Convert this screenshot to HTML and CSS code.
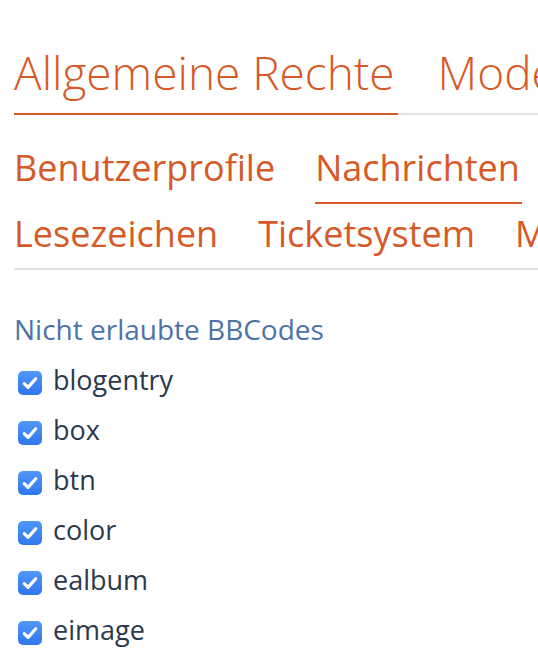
FILE: index.html
```html
<!DOCTYPE html>
<html lang="de">
<head>
<meta charset="utf-8">
<title>Benutzergruppenrechte</title>
<link rel="stylesheet" href="styles.css">
</head>
<body>
<div class="page">
  <nav class="main-tabs">
    <a class="main-tab active">Allgemeine Rechte</a>
    <a class="main-tab">Moderationsrechte</a>
  </nav>
  <nav class="sub-tabs">
    <a class="sub-tab">Benutzerprofile</a>
    <a class="sub-tab active">Nachrichten</a>
    <a class="sub-tab">Lesezeichen</a>
    <a class="sub-tab">Ticketsystem</a>
    <a class="sub-tab">Mitglieder</a>
  </nav>
  <section class="option">
    <div class="option-label">Nicht erlaubte BBCodes</div>
    <ul class="check-list">
      <li class="check-item"><span class="box"><svg viewBox="0 0 24 24" width="24" height="24"><path d="M6.3 12.6 L10.1 16.4 L17.7 7.8" fill="none" stroke="#fff" stroke-width="3.2" stroke-linecap="round" stroke-linejoin="round"/></svg></span><span class="check-text">blogentry</span></li>
      <li class="check-item"><span class="box"><svg viewBox="0 0 24 24" width="24" height="24"><path d="M6.3 12.6 L10.1 16.4 L17.7 7.8" fill="none" stroke="#fff" stroke-width="3.2" stroke-linecap="round" stroke-linejoin="round"/></svg></span><span class="check-text">box</span></li>
      <li class="check-item"><span class="box"><svg viewBox="0 0 24 24" width="24" height="24"><path d="M6.3 12.6 L10.1 16.4 L17.7 7.8" fill="none" stroke="#fff" stroke-width="3.2" stroke-linecap="round" stroke-linejoin="round"/></svg></span><span class="check-text">btn</span></li>
      <li class="check-item"><span class="box"><svg viewBox="0 0 24 24" width="24" height="24"><path d="M6.3 12.6 L10.1 16.4 L17.7 7.8" fill="none" stroke="#fff" stroke-width="3.2" stroke-linecap="round" stroke-linejoin="round"/></svg></span><span class="check-text">color</span></li>
      <li class="check-item"><span class="box"><svg viewBox="0 0 24 24" width="24" height="24"><path d="M6.3 12.6 L10.1 16.4 L17.7 7.8" fill="none" stroke="#fff" stroke-width="3.2" stroke-linecap="round" stroke-linejoin="round"/></svg></span><span class="check-text">ealbum</span></li>
      <li class="check-item"><span class="box"><svg viewBox="0 0 24 24" width="24" height="24"><path d="M6.3 12.6 L10.1 16.4 L17.7 7.8" fill="none" stroke="#fff" stroke-width="3.2" stroke-linecap="round" stroke-linejoin="round"/></svg></span><span class="check-text">eimage</span></li>
    </ul>
  </section>
</div>
</body>
</html>
```

FILE: styles.css
```css
html, body {
  margin: 0;
  padding: 0;
  background: #ffffff;
  overflow: hidden;
}

body {
  font-family: "Open Sans", "Noto Sans", sans-serif;
  width: 538px;
  height: 666px;
}

.page {
  width: 740px;
  padding: 45px 0 0 14px;
}

.main-tabs {
  display: flex;
  flex-wrap: nowrap;
  border-bottom: 2px solid #e2e2e2;
}

.main-tab {
  display: block;
  white-space: nowrap;
  font-size: 46px;
  font-weight: 300;
  line-height: 54px;
  color: #d65a28;
  padding: 0 3px 14px 0;
  margin: 0 40px -2px 0;
  border-bottom: 2px solid transparent;
}

.main-tab.active {
  border-bottom-color: #d65a28;
}

.sub-tabs {
  display: flex;
  flex-wrap: wrap;
  row-gap: 10px;
  margin-top: 31px;
  border-bottom: 2px solid #e2e2e2;
}

.sub-tab {
  display: block;
  white-space: nowrap;
  font-size: 36px;
  line-height: 44px;
  color: #d65a28;
  padding: 0 2px 12px 0;
  margin: 0 38px -2px 0;
  border-bottom: 2px solid transparent;
}

.sub-tab.active {
  border-bottom-color: #d65a28;
}

.option {
  margin-top: 40px;
}

.option-label {
  font-size: 28px;
  line-height: 38px;
  color: #4d72a8;
  margin-bottom: 10px;
}

.check-list {
  list-style: none;
  margin: 0;
  padding: 0 0 0 4px;
}

.check-item {
  display: flex;
  align-items: center;
  height: 50px;
  gap: 11px;
}

.box {
  display: block;
  flex: none;
  width: 24px;
  height: 24px;
  border-radius: 5px;
  background: linear-gradient(#4f97f8, #2f77ee);
}

.box svg {
  display: block;
}

.check-text {
  font-size: 27px;
  line-height: 34px;
  padding-bottom: 6px;
  color: #2b394c;
}
```
